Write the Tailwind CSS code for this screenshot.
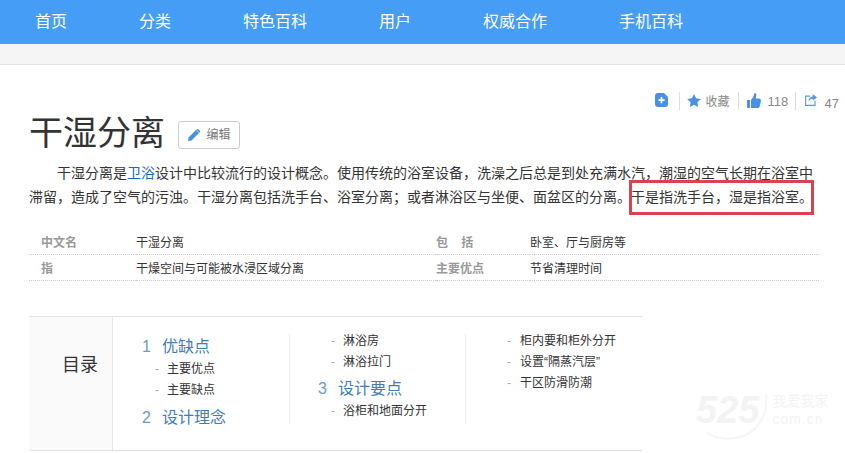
<!DOCTYPE html>
<html lang="zh">
<head>
  <meta charset="UTF-8" />
  <title>干湿分离</title>
  <script src="https://cdn.jsdelivr.net/npm/@tailwindcss/browser@4"></script>
</head>
<body class="bg-white text-[#333] overflow-hidden font-['Liberation_Sans','Noto_Sans_CJK_SC',sans-serif]">
<div class="relative w-[845px] h-[453px] overflow-hidden">

  <!-- nav -->
  <nav class="h-[44px] bg-[#459df5] flex items-center gap-[72px] pl-[35px] text-white text-[16px]">
    <a>首页</a><a>分类</a><a>特色百科</a><a>用户</a><a>权威合作</a><a>手机百科</a>
  </nav>
  <div class="h-[21px] bg-[#f5f5f5] border-b border-[#e3e3e3]"></div>

  <main class="pl-[29px]">
    <!-- actions -->
    <div class="h-[47px] pt-[27px] pr-[6px] flex justify-end items-start text-[12px] text-[#888]">
      <div class="flex items-center h-[18px]">
        <svg class="w-[13px] h-[14px] -mt-[2px]" viewBox="0 0 13 14"><path fill="#4a90e2" d="M3 0h6l4 4v7a3 3 0 0 1-3 3H3a3 3 0 0 1-3-3V3a3 3 0 0 1 3-3z"/><path fill="#fff" d="M5.600 4h1.800v2.200h2.200V8H7.400v2.200H5.600V8H3.400V6.200h2.200z"/></svg>
        <span class="w-px h-[18px] bg-[#ddd] ml-[11px]"></span>
        <svg class="w-[14px] h-[13px] ml-[7px] -mt-[2px]" viewBox="0 0 24 23"><path fill="#4a90e2" d="M12 0l3.700 7.600 8.300 1.200-6 5.900 1.400 8.300-7.400-3.900L4.600 23 6 14.700 0 8.800l8.300-1.200z"/></svg>
        <span class="ml-[5px] w-[25px] mt-[2px] whitespace-nowrap">收藏</span>
        <span class="w-px h-[18px] bg-[#ddd] ml-[7px]"></span>
        <svg class="w-[14px] h-[15px] ml-[8px] -mt-[2px]" viewBox="0 0 14 15"><path fill="#4a90e2" d="M0 7h3v8H1a1 1 0 0 1-1-1zM4 7l2.500-3.500L7.500 0c1.500 0 2 1.200 1.800 2.500L8.800 5.500h3.200c1.400 0 2.200 1.100 1.900 2.400l-1.100 5.300c-.3 1.100-1 1.800-2.100 1.800H4z"/></svg>
        <span class="ml-[7px] w-[19px] mt-[2px] text-[13px]">118</span>
        <span class="w-px h-[18px] bg-[#ddd] ml-[8px]"></span>
        <svg class="w-[14px] h-[12px] ml-[8px] -mt-[2px]" viewBox="0 0 14 14" fill="none"><path stroke="#5b96d8" stroke-width="1.300" d="M6 2.500H.7v10.800h11V8"/><path fill="#5b96d8" d="M9 0l5 4-5 4V5.500C6.500 5.500 5 6.800 4 9c0-3.500 2-6 5-6z"/></svg>
        <span class="ml-[7px] mt-[5px] text-[13px]">47</span>
      </div>
    </div>

    <!-- title -->
    <div class="flex items-center h-[42px]">
      <h1 class="text-[34px] leading-[42px] font-normal text-[#333] w-[149px] whitespace-nowrap">干湿分离</h1>
      <button class="mt-[4px] w-[62px] h-[28px] border border-[#ccc] rounded-[3px] flex items-center justify-center gap-[6px] text-[12px] text-[#777] bg-white">
        <svg class="w-[13px] h-[13px]" viewBox="0 0 13 13"><path fill="#4a90e2" d="M9 1l3 3-7.500 7.500-3.500.5.500-3.500zM9.800.2a1 1 0 0 1 1.400 0l1.600 1.600a1 1 0 0 1 0 1.400l-.5.5-3-3z"/></svg>
        编辑
      </button>
    </div>

    <!-- summary -->
    <p class="mt-[7px] text-[14px] leading-[24px] text-[#333] indent-[28px] w-[790px]">干湿分离是<a class="text-[#136ec2]">卫浴</a>设计中比较流行的设计概念。使用传统的浴室设备，洗澡之后总是到处充满水汽，潮湿的空气长期在浴室中滞留，造成了空气的污浊。干湿分离包括洗手台、浴室分离；或者淋浴区与坐便、面盆区的分离。干是指洗手台，湿是指浴室。</p>

    <!-- basic info -->
    <dl class="mt-[20px] grid grid-cols-[107px_300px_94px_1fr] text-[12px] w-[790px]">
      <dt class="h-[26px] leading-[28px] pl-[12px] font-bold text-[#999] border-b border-dotted border-[#ccc]">中文名</dt>
      <dd class="h-[26px] leading-[28px] border-b border-dotted border-[#ccc]">干湿分离</dd>
      <dt class="h-[26px] leading-[28px] font-bold text-[#999] border-b border-dotted border-[#ccc] whitespace-pre">包    括</dt>
      <dd class="h-[26px] leading-[28px] border-b border-dotted border-[#ccc]">卧室、厅与厨房等</dd>
      <dt class="h-[26px] leading-[28px] pl-[12px] font-bold text-[#999] border-b border-dotted border-[#ccc]">指</dt>
      <dd class="h-[26px] leading-[28px] border-b border-dotted border-[#ccc]">干燥空间与可能被水浸区域分离</dd>
      <dt class="h-[26px] leading-[28px] font-bold text-[#999] border-b border-dotted border-[#ccc]">主要优点</dt>
      <dd class="h-[26px] leading-[28px] border-b border-dotted border-[#ccc]">节省清理时间</dd>
    </dl>

    <!-- catalog -->
    <section class="mt-[35px] w-[613px] h-[135px] border-y border-[#e3e3e3] flex">
      <div class="w-[84px] shrink-0 bg-[#fafafa] border-r border-[#e8e8e8] pt-[36px] pl-[33px] text-[18px] leading-[24px] text-[#333]">目录</div>
      <div class="flex pt-[17px] items-start">
        <ol class="w-[177px] h-[90px] border-r border-[#eee] pl-[29px] text-[12px]">
          <li class="flex items-center h-[22px] mt-[2px] text-[16px] text-[#3f7cb8]"><span class="w-[20px] text-[#6a9cc9]">1</span>优缺点</li>
          <li class="flex items-center h-[21px] pl-[13px]"><span class="w-[12px] text-[#aaa]">-</span>主要优点</li>
          <li class="flex items-center h-[21px] pl-[13px]"><span class="w-[12px] text-[#aaa]">-</span>主要缺点</li>
          <li class="flex items-center h-[18px] mt-[9px] text-[16px] text-[#3f7cb8]"><span class="w-[20px] text-[#6a9cc9]">2</span>设计理念</li>
        </ol>
        <ol class="w-[176px] h-[90px] border-r border-[#eee] pl-[28px] text-[12px]">
          <li class="flex items-center h-[21px] -mt-[4px] pl-[13px]"><span class="w-[12px] text-[#aaa]">-</span>淋浴房</li>
          <li class="flex items-center h-[21px] pl-[13px]"><span class="w-[12px] text-[#aaa]">-</span>淋浴拉门</li>
          <li class="flex items-center h-[34px] text-[16px] text-[#3f7cb8]"><span class="w-[20px] text-[#6a9cc9]">3</span>设计要点</li>
          <li class="flex items-center h-[10px] pl-[13px]"><span class="w-[12px] text-[#aaa]">-</span>浴柜和地面分开</li>
        </ol>
        <ol class="pl-[41px] text-[12px]">
          <li class="flex items-center h-[21px] -mt-[4px]"><span class="w-[13px] text-[#aaa]">-</span>柜内要和柜外分开</li>
          <li class="flex items-center h-[21px]"><span class="w-[13px] text-[#aaa]">-</span>设置“隔蒸汽层”</li>
          <li class="flex items-center h-[21px]"><span class="w-[13px] text-[#aaa]">-</span>干区防滑防潮</li>
        </ol>
      </div>
    </section>
  </main>

  <!-- red annotation -->
  <div class="absolute left-[629px] top-[180px] w-[185px] h-[35px] border-[3px] border-[#d9434e]"></div>

  <!-- watermark -->
  <div class="absolute left-[696px] top-[388px] flex items-start text-[#f3f3f3] select-none">
    <span class="text-[38px] leading-[44px] font-bold italic">525</span>
    <div class="ml-[13px] mt-[3px] text-[14px]">
      <div class="leading-[20px] whitespace-nowrap">我爱我家</div>
      <div class="leading-[16px] tracking-[1px]">com.cn</div>
    </div>
  </div>
  <svg class="absolute left-[700px] top-[392px] w-[72px] h-[52px]" viewBox="0 0 72 52" fill="none"><path stroke="#f5f5f5" stroke-width="2" d="M66 2c2 22-8 40-30 44-12 2-22 0-30-6"/></svg>
</div>
</body>
</html>
